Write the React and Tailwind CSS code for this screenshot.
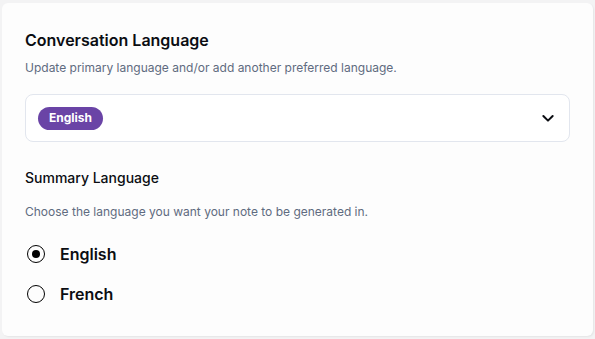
function Radio({ checked, label }) {
  return (
    <label className="flex items-center gap-[15px] h-[20px]">
      <span className="w-[18px] h-[18px] rounded-full border-[1.5px] border-black flex items-center justify-center">
        {checked && <span className="w-[8px] h-[8px] rounded-full bg-black" />}
      </span>
      <span className="text-[16px] font-semibold text-[#0b0d12]">{label}</span>
    </label>
  )
}

export default function App() {
  return (
    <div className="w-[595px] h-[339px] bg-[#f3f3f4] pt-[3px] pl-[2px] pr-[2px] pb-[3px] font-['Inter',sans-serif]">
      <div className="h-full bg-[#fdfdfd] rounded-[6px] shadow-[1px_1px_2px_rgba(0,0,0,0.06)] px-[23px] pt-[27px]">
        <h2 className="text-[16px] leading-[20px] font-semibold text-[#0b0d12]">Conversation Language</h2>
        <p className="text-[12px] leading-[16px] text-[#5f6b80] mt-[10px]">
          Update primary language and/or add another preferred language.
        </p>
        <div className="mt-[18px] h-[48px] rounded-[8px] border border-[#e2e6ee] bg-white flex items-center justify-between pl-[12px] pr-[13px]">
          <span className="h-[23px] px-[11px] rounded-full bg-[#6a44a6] text-white text-[12px] font-bold flex items-center">
            English
          </span>
          <svg width="16" height="16" viewBox="0 0 24 24" fill="none" stroke="#0b0d12" strokeWidth="3" strokeLinecap="round" strokeLinejoin="round">
            <path d="M5 9l7 7 7-7" />
          </svg>
        </div>
        <h3 className="mt-[27px] text-[14px] leading-[18px] font-medium text-[#0b0d12]">Summary Language</h3>
        <p className="mt-[17px] text-[12px] leading-[16px] text-[#5f6b80]">
          Choose the language you want your note to be generated in.
        </p>
        <div className="mt-[24px] pl-[2px] flex flex-col gap-[20px]">
          <Radio checked label="English" />
          <Radio label="French" />
        </div>
      </div>
    </div>
  )
}
